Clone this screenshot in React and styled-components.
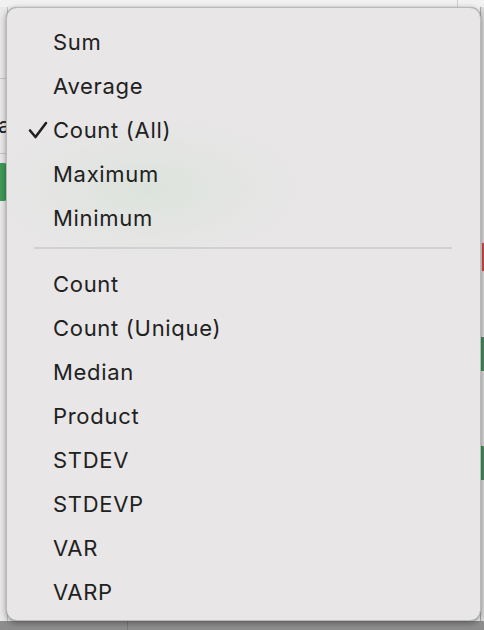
import React from 'react';
import styled, { createGlobalStyle } from 'styled-components';

const GlobalStyle = createGlobalStyle`
  html, body {
    margin: 0;
    padding: 0;
    background: #ececec;
  }
  body {
    font-family: Inter, "Noto Sans", "Liberation Sans", sans-serif;
  }
`;

const Page = styled.div`
  position: relative;
  width: 484px;
  height: 630px;
  overflow: hidden;
  background: #efefef;
  display: grid;
  grid-template-rows: 7px 1fr 9px;
  grid-template-columns: 8px 1fr 4px;
`;

// what shows of the spreadsheet behind the menu
const TopStrip = styled.div`
  grid-column: 1 / 4;
  background: #f1f1f1;
  display: flex;
  justify-content: flex-end;
  padding-right: 26px;
  &::after {
    content: '';
    width: 1px;
    background: #d0d0d0;
  }
`;

const LeftStrip = styled.div`
  background: #e9e9e9;
  border-right: 1px solid #c4c4c4;
  display: flex;
  flex-direction: column;
  overflow: hidden;
`;

const Cell = styled.div`
  height: ${p => p.h}px;
  flex-shrink: 0;
  border-bottom: 1px solid #c6c6c6;
  display: flex;
  align-items: flex-end;
  justify-content: flex-end;
  font-size: 21px;
  line-height: 1;
  color: #222;
`;

const CellText = styled.span`
  margin-bottom: 17px;
  margin-right: -3px;
`;

const GreenBar = styled.div`
  margin-top: 9px;
  width: 7px;
  height: 38px;
  background: #3f9a57;
  border-radius: 0 3px 3px 0;
`;

const Middle = styled.div``;

const RightStrip = styled.div`
  background: #d9d9d9;
  border-left: 1px solid #a9a9a9;
  display: flex;
  flex-direction: column;
`;

const RedMark = styled.div`
  margin-top: 236px;
  height: 28px;
  border-top: 2px solid #d2463a;
  border-bottom: 2px solid #d2463a;
  border-left: 2px solid #d2463a;
  box-sizing: border-box;
  margin-left: 1px;
`;

const GreenMark = styled.div`
  margin-top: ${p => p.gap}px;
  height: 34px;
  background: #3f8f5b;
`;

const BottomStrip = styled.div`
  grid-column: 1 / 4;
  background: #8d8d8d;
  display: flex;
  padding-left: 127px;
  &::after {
    content: '';
    width: 1px;
    background: #7a7a7a;
  }
`;

// the popup menu itself, floating over the sheet
const Menu = styled.div`
  position: absolute;
  left: 6px;
  top: 7px;
  width: 475px;
  box-sizing: border-box;
  padding: 12px 0 6px;
  border-radius: 11px;
  border: 1px solid #b9b9b9;
  background:
    radial-gradient(ellipse 150px 70px at 140px 180px, rgba(200, 222, 200, 0.35), rgba(232, 230, 231, 0) 100%),
    #e8e6e7;
  box-shadow: 0 2px 6px rgba(0, 0, 0, 0.35), 0 0 1px rgba(0, 0, 0, 0.3);
  display: flex;
  flex-direction: column;
`;

const Item = styled.div`
  height: 44px;
  display: grid;
  grid-template-columns: 46px 1fr;
  align-items: center;
  font-size: 22px;
  color: #212121;
  letter-spacing: 0.7px;
`;

const CheckSlot = styled.div`
  display: flex;
  justify-content: flex-end;
  padding-right: 5px;
`;

const Check = styled.svg`
  width: 20px;
  height: 18px;
`;

const Separator = styled.div`
  height: 22px;
  box-sizing: border-box;
  padding: 7px 28px 0 27px;
  display: flex;
  align-items: flex-start;
  &::before {
    content: '';
    flex: 1;
    height: 2px;
    background: #d2d1d1;
  }
`;

const groupOne = ['Sum', 'Average', 'Count (All)', 'Maximum', 'Minimum'];
const groupTwo = ['Count', 'Count (Unique)', 'Median', 'Product', 'STDEV', 'STDEVP', 'VAR', 'VARP'];
const checked = 'Count (All)';

const MenuItem = ({ label }) => (
  <Item>
    <CheckSlot>
      {label === checked ? (
        <Check viewBox="0 0 20 18">
          <path d="M2 9.5 L7.5 16 L18 2" fill="none" stroke="#212121" strokeWidth="2.6" strokeLinecap="round" strokeLinejoin="round" />
        </Check>
      ) : null}
    </CheckSlot>
    <span>{label}</span>
  </Item>
);

const App = () => (
  <Page>
    <GlobalStyle />
    <TopStrip />
    <LeftStrip>
      <Cell h={71} />
      <Cell h={74}>
        <CellText>a</CellText>
      </Cell>
      <GreenBar />
    </LeftStrip>
    <Middle />
    <RightStrip>
      <RedMark />
      <GreenMark gap={66} />
      <GreenMark gap={75} />
    </RightStrip>
    <BottomStrip />
    <Menu>
      {groupOne.map(l => <MenuItem key={l} label={l} />)}
      <Separator />
      {groupTwo.map(l => <MenuItem key={l} label={l} />)}
    </Menu>
  </Page>
);

export default App;
